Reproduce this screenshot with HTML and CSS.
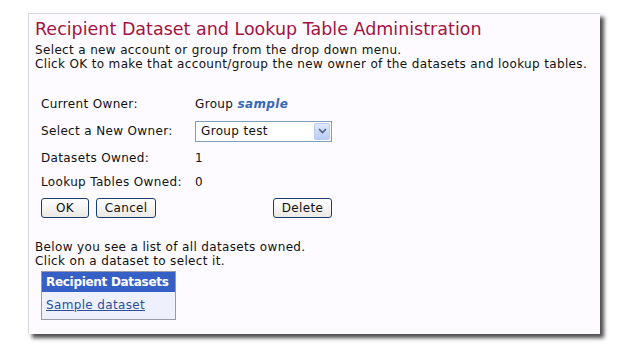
FILE: index.html
```html
<!DOCTYPE html>
<html lang="en">
<head>
    <meta charset="UTF-8">
    <title>Recipient Dataset and Lookup Table Administration</title>
    <link rel="stylesheet" href="styles.css">
</head>
<body>
    <div class="panel">
        <h1 class="title">Recipient Dataset and Lookup Table Administration</h1>
        <p class="intro">Select a new account or group from the drop down menu.<br>
        Click OK to make that account/group the new owner of the datasets and lookup tables.</p>

        <div class="owner-form">
            <div class="row row-current">
                <span class="label">Current Owner:</span>
                <span class="value">Group <b class="owner-name">sample</b></span>
            </div>
            <div class="row row-select">
                <span class="label">Select a New Owner:</span>
                <span class="value">
                    <span class="select-box">
                        <span class="select-text">Group test</span>
                        <span class="select-arrow">
                            <svg width="9" height="6" viewBox="0 0 9 6"><path d="M1 1 L4.5 4.5 L8 1" fill="none" stroke="#4d6185" stroke-width="1.6"/></svg>
                        </span>
                    </span>
                </span>
            </div>
            <div class="row row-datasets">
                <span class="label">Datasets Owned:</span>
                <span class="value">1</span>
            </div>
            <div class="row row-lookup">
                <span class="label">Lookup Tables Owned:</span>
                <span class="value">0</span>
            </div>
            <div class="row buttons">
                <span class="label">
                    <button class="btn btn-ok">OK</button>
                    <button class="btn btn-cancel">Cancel</button>
                </span>
                <span class="value delete-cell">
                    <button class="btn">Delete</button>
                </span>
            </div>
        </div>

        <p class="intro list-intro">Below you see a list of all datasets owned.<br>
        Click on a dataset to select it.</p>

        <table class="datasets">
            <tr><th>Recipient Datasets</th></tr>
            <tr><td><a href="#">Sample dataset</a></td></tr>
        </table>
    </div>
</body>
</html>
```

FILE: styles.css
```css
* {
    box-sizing: border-box;
}

html {
    background: #ffffff;
}

body {
    margin: 0;
    padding: 13px 0 14px 28px;
    min-height: 348px;
    background: #ffffff;
    font-family: "DejaVu Sans", Verdana, sans-serif;
    font-size: 12px;
    letter-spacing: 0.35px;
    color: #111;
}

.panel {
    width: 572px;
    height: 321px;
    background: #fdfbff;
    border: 1px solid #d8d8dc;
    border-right: none;
    border-bottom: none;
    padding: 4px 0 0 6px;
    box-shadow: 4px 4px 4px rgba(0, 0, 0, 0.7);
}

.title {
    margin: 0;
    font-size: 17.5px;
    font-weight: normal;
    letter-spacing: 0;
    color: #a3133f;
    line-height: 22px;
}

.intro {
    margin: 3px 0 0 0;
    line-height: 14px;
}

.owner-form {
    margin: 20px 0 0 6px;
    width: 291px;
}

.row {
    display: flex;
    align-items: center;
    height: 26px;
}

.row-select {
    height: 28px;
}

.row-lookup {
    height: 21px;
}

.row .label {
    width: 154px;
}

.owner-name {
    color: #3767b6;
    font-style: italic;
}

.select-box {
    display: flex;
    align-items: center;
    width: 137px;
    height: 21px;
    border: 1px solid #7f9db9;
    background: #fff;
    padding: 1px;
}

.select-text {
    flex: 1;
    padding-left: 4px;
}

.select-arrow {
    width: 16px;
    height: 17px;
    display: flex;
    align-items: center;
    justify-content: center;
    background: linear-gradient(#dfe8fb, #b9cdf5);
    border: 1px solid #bcccef;
    border-radius: 2px;
}

.buttons {
    height: 32px;
}

.delete-cell {
    flex: 1;
    display: flex;
    justify-content: flex-end;
}

.btn {
    font-family: "DejaVu Sans", Verdana, sans-serif;
    font-size: 12px;
    letter-spacing: 0.35px;
    height: 20px;
    padding: 0 6px;
    background: linear-gradient(#ffffff, #ece9e4);
    border: 1px solid #1c3c6e;
    border-radius: 3px;
    color: #111;
    margin-right: 3px;
}

.btn-ok {
    width: 48px;
}

.btn-cancel {
    width: 60px;
}

.delete-cell .btn {
    margin-right: 0;
    width: 59px;
}

.list-intro {
    margin-top: 16px;
}

.datasets {
    margin: 3px 0 0 6px;
    border-collapse: collapse;
    border: 1px solid #9a9aa6;
    width: 135px;
}

.datasets th {
    background: #3760c6;
    color: #fff;
    text-align: left;
    font-weight: bold;
    letter-spacing: -0.3px;
    height: 20px;
    padding: 0 4px;
    white-space: nowrap;
}

.datasets td {
    background: #eef1fb;
    height: 28px;
    padding: 0 4px;
}

.datasets a {
    color: #2b4e9e;
}
```
